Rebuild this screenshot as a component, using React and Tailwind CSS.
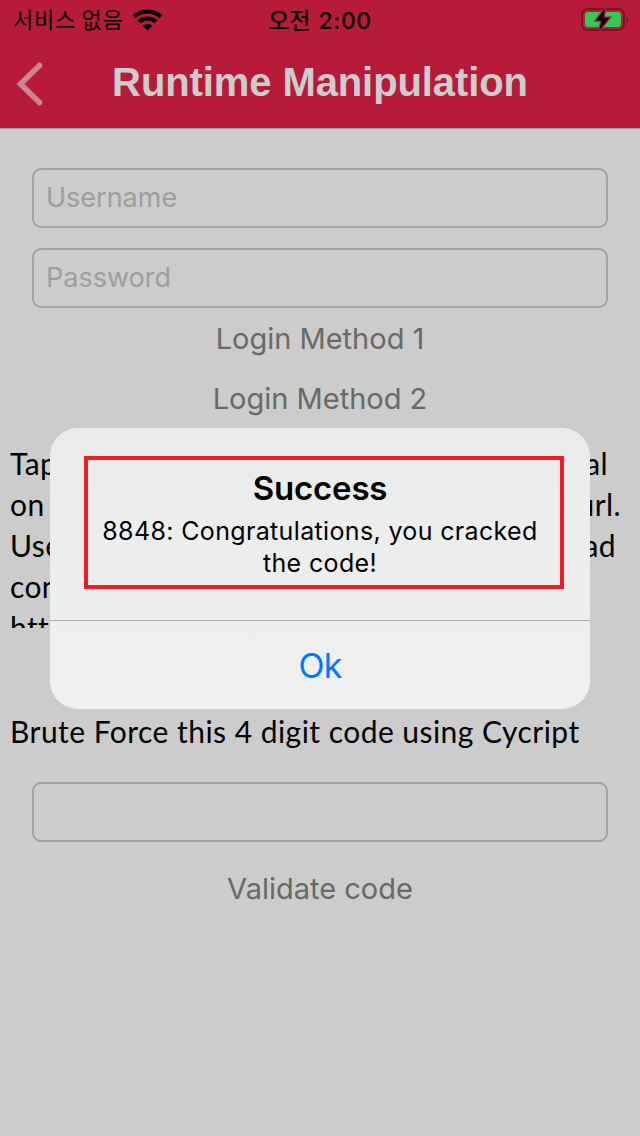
const hintLines = [
  { start: 'Tap', end: 'al', endClass: 'pr-[13px]' },
  { start: 'on', end: 'url.', endClass: 'pr-0' },
  { start: 'Use', end: 'ad', endClass: 'pr-[5px]' },
  { start: 'con', end: '', endClass: 'pr-0' },
  { start: 'http', end: '', endClass: 'pr-0' },
];

function StatusBar() {
  return (
    <div className="relative flex h-10 items-center justify-between pr-[12px] pl-[13px] text-black">
      <div className="flex items-center gap-[9px]">
        <span className="pb-[3px] font-['Noto_Sans_CJK_KR',sans-serif] text-[22px] leading-[37px] font-normal tracking-[0.7px] whitespace-nowrap">서비스 없음</span>
        <svg className="h-[22px] w-[31px]" viewBox="0 0 31 22" fill="none">
          <path d="M2.200 7.600C9.500.8 21.500.8 28.800 7.600" stroke="currentColor" strokeWidth="4.200" />
          <path d="M7 12.700C11.600 8.400 19.400 8.400 24 12.700" stroke="currentColor" strokeWidth="4" />
          <path d="M10.800 16.700C13.500 14.500 17.500 14.500 20.200 16.700L15.500 21.500Z" fill="currentColor" />
        </svg>
      </div>
      <div className="absolute inset-x-0 top-0 flex h-10 items-center justify-center gap-[8px] text-[23px] font-medium">
        <span className="pb-[2px] font-['Noto_Sans_CJK_KR',sans-serif]">오전</span>
        <span className="pt-[2px] font-['Inter',sans-serif] font-medium tracking-[0.6px]">2:00</span>
      </div>
      <svg className="h-6 w-[48px]" viewBox="0 0 48 24" fill="none">
        <rect x="2" y="1" width="42" height="21" rx="5.500" stroke="#7a1226" strokeWidth="2" />
        <rect x="5" y="4" width="36" height="15" rx="3" fill="#34c759" />
        <path d="M46.500 8.500c2.500 1 2.500 5.500 0 6.500z" fill="#7a1226" />
        <path d="M25 .5L16 12.500h5.500L19.500 22L29.500 9.800H23.500z" fill="#000" stroke="#b81b39" strokeWidth="2.500" paintOrder="stroke" />
      </svg>
    </div>
  );
}

function Field({ placeholder = '' }) {
  return (
    <div className="mx-8 flex h-[60px] items-center rounded-[9px] border-2 border-[#a3a3a3] px-[12px] font-['Inter',sans-serif] text-[27px] text-[#9e9e9e]">
      {placeholder}
    </div>
  );
}

function TextButton({ children }) {
  return (
    <button className="block h-[60px] w-full font-['Inter',sans-serif] text-[29px] text-[#696969]">
      {children}
    </button>
  );
}

function Alert() {
  return (
    <div className="absolute top-[428px] left-[50px] flex h-[281px] w-[540px] flex-col overflow-hidden rounded-[28px] bg-linear-to-b from-[#eaebeb] to-[#f0f0f0] font-['Inter',sans-serif] text-black">
      <div className="h-[192px] px-[34px] pt-[28px]">
        <div className="h-[133px] w-[480px] border-4 border-[#ee1c25] pt-[8px] pr-[8px] text-center">
          <h2 className="text-[33px] leading-[40px] font-semibold tracking-[-0.2px]">Success</h2>
          <p className="pt-[7px] text-[25px] leading-[32px] tracking-[0.35px] whitespace-nowrap">
            8848: Congratulations, you cracked
            <br />
            the code!
          </p>
        </div>
      </div>
      <button className="h-[89px] border-t border-[#adadad] text-[34px] tracking-[-0.8px] text-[#007aff]">Ok</button>
    </div>
  );
}

export default function App() {
  return (
    <div className="relative h-[1136px] w-[640px] overflow-hidden bg-[#cccccc]">
      <header className="h-[129px] border-b border-[#9c9c9c] bg-[#b81b39]">
        <StatusBar />
        <div className="relative flex h-[88px] items-start justify-center">
          <svg className="absolute top-[22px] left-[16px] h-[44px] w-[28px]" viewBox="0 0 28 44" fill="none">
            <path d="M23.500 3.500L4.500 22L23.500 40.500" stroke="#c98594" strokeWidth="5.500" strokeLinecap="round" />
          </svg>
          <h1 className="font-['Liberation_Sans',sans-serif] text-[40px] leading-[84px] font-bold tracking-[-0.1px] text-[#cdcdcd]">
            Runtime Manipulation
          </h1>
        </div>
      </header>
      <main>
        <div className="flex flex-col gap-5 pt-[39px]">
          <Field placeholder="Username" />
          <Field placeholder="Password" />
        </div>
        <div className="pt-px">
          <TextButton>Login Method 1</TextButton>
          <TextButton>Login Method 2</TextButton>
        </div>
        <div className="h-[199px] overflow-hidden pt-[14px] pr-[19px] pl-[10px] font-['Lato',sans-serif] text-[30px] leading-[41px] tracking-[0.4px] text-black">
          {hintLines.map(({ start, end, endClass }) => (
            <div key={start} className="flex justify-between">
              <span>{start}</span>
              <span className={endClass}>{end}</span>
            </div>
          ))}
        </div>
        <p className="pt-[83px] pl-[10px] font-['Lato',sans-serif] text-[30px] leading-[41px] tracking-[0.46px] whitespace-nowrap text-black">
          Brute Force this 4 digit code using Cycript
        </p>
        <div className="pt-[30px]">
          <Field />
        </div>
        <div className="pt-[17px]">
          <TextButton>Validate code</TextButton>
        </div>
      </main>
      <Alert />
    </div>
  );
}
